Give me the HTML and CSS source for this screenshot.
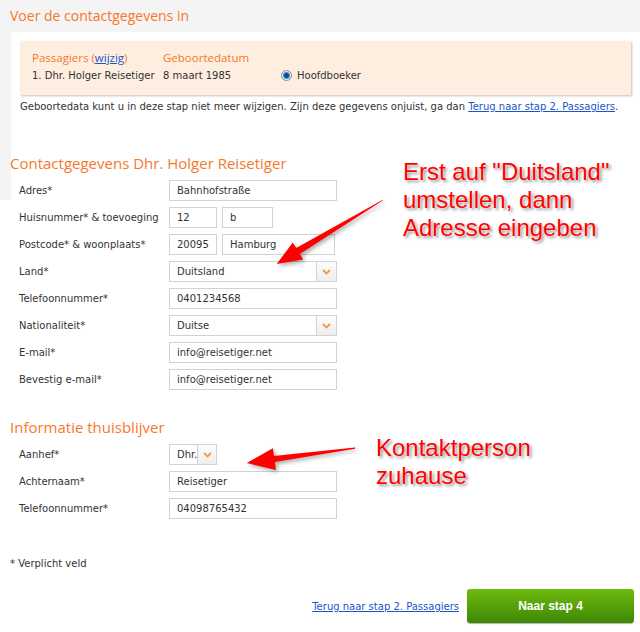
FILE: index.html
```html
<!DOCTYPE html>
<html lang="nl">
<head>
  <meta charset="UTF-8">
  <title>Contactgegevens</title>
  <link rel="stylesheet" href="styles.css">
</head>
<body>
  <div class="page">
    <h1 class="page-title">Voer de contactgegevens in</h1>

    <div class="passengers">
      <div class="pass-row pass-head">
        <span class="col-name">Passagiers (<a href="#">wijzig</a>)</span>
        <span class="col-date">Geboortedatum</span>
      </div>
      <div class="pass-row">
        <span class="col-name">1. Dhr. Holger Reisetiger</span>
        <span class="col-date">8 maart 1985</span>
        <span class="radio"><span class="radio-dot"></span>Hoofdboeker</span>
      </div>
    </div>
    <p class="note">Geboortedata kunt u in deze stap niet meer wijzigen. Zijn deze gegevens onjuist, ga dan <a href="#">Terug naar stap 2. Passagiers</a>.</p>

    <h2 class="section-title">Contactgegevens Dhr. Holger Reisetiger</h2>
    <div class="form">
      <div class="form-row"><label>Adres*</label><span class="field w-full">Bahnhofstraße</span></div>
      <div class="form-row"><label>Huisnummer* &amp; toevoeging</label><span class="field w-small">12</span><span class="field w-addon">b</span></div>
      <div class="form-row"><label>Postcode* &amp; woonplaats*</label><span class="field w-small">20095</span><span class="field w-city">Hamburg</span></div>
      <div class="form-row"><label>Land*</label><span class="select w-full"><span class="select-value">Duitsland</span><span class="select-btn"><svg width="9" height="6" viewBox="0 0 9 6"><path d="M1 1l3.5 3.5L8 1" fill="none" stroke="#f39a3c" stroke-width="1.8"/></svg></span></span></div>
      <div class="form-row"><label>Telefoonnummer*</label><span class="field w-full">0401234568</span></div>
      <div class="form-row"><label>Nationaliteit*</label><span class="select w-full"><span class="select-value">Duitse</span><span class="select-btn"><svg width="9" height="6" viewBox="0 0 9 6"><path d="M1 1l3.5 3.5L8 1" fill="none" stroke="#f39a3c" stroke-width="1.8"/></svg></span></span></div>
      <div class="form-row"><label>E-mail*</label><span class="field w-full">info@reisetiger.net</span></div>
      <div class="form-row"><label>Bevestig e-mail*</label><span class="field w-full">info@reisetiger.net</span></div>
    </div>

    <h2 class="section-title second">Informatie thuisblijver</h2>
    <div class="form">
      <div class="form-row"><label>Aanhef*</label><span class="select w-title"><span class="select-value">Dhr.</span><span class="select-btn"><svg width="9" height="6" viewBox="0 0 9 6"><path d="M1 1l3.5 3.5L8 1" fill="none" stroke="#f39a3c" stroke-width="1.8"/></svg></span></span></div>
      <div class="form-row"><label>Achternaam*</label><span class="field w-full">Reisetiger</span></div>
      <div class="form-row"><label>Telefoonnummer*</label><span class="field w-full">04098765432</span></div>
    </div>

    <p class="required">* Verplicht veld</p>

    <div class="actions">
      <a href="#" class="back-link">Terug naar stap 2. Passagiers</a>
      <button class="next-btn">Naar stap 4</button>
    </div>

    <!-- annotaties -->
    <div class="callout callout-land">Erst auf "Duitsland"<br>umstellen, dann<br>Adresse eingeben</div>
    <div class="callout callout-home">Kontaktperson<br>zuhause</div>
    <svg class="arrows" width="640" height="632" viewBox="0 0 640 632">
      <polygon points="383.3,199.4 382.7,200.4 299.8,254 303.2,259.6 276.7,264 292.8,242.5 296.2,248" fill="#f00"/>
      <polygon points="355,447.6 355.1,448.8 274.8,462.1 275.9,470 246.7,463 272.9,448.2 274,456.1" fill="#f00"/>
    </svg>
  </div>
</body>
</html>
```

FILE: styles.css
```css
body {
  margin: 0;
  background-color: #fff;
  font-family: 'DejaVu Sans', Verdana, sans-serif;
  font-size: 10px;
  color: #333;
}

.page {
  position: relative;
  width: 640px;
  height: 632px;
  overflow: hidden;
  background:
    linear-gradient(#f4f4f4, #f4f4f4) no-repeat 0 0 / 100% 32px,
    linear-gradient(#f4f4f4, #f4f4f4) no-repeat 0 0 / 11px 200px,
    #fff;
}

a {
  color: #1a55c8;
}

.page-title,
.section-title {
  font-family: 'Open Sans', sans-serif;
  font-weight: normal;
  color: #f7782a;
  margin: 0;
}

.page-title {
  font-size: 14px;
  line-height: 32px;
  padding-left: 10px;
  height: 32px;
}

.passengers {
  margin: 9px 9px 0 20px;
  height: 54px;
  background-color: #fdeee0;
  box-shadow: 1px 1px 2px rgba(0, 0, 0, 0.25);
  padding: 7px 0 0 12px;
  box-sizing: border-box;
}

.pass-row {
  display: flex;
  align-items: center;
  height: 18px;
}

.pass-head {
  font-family: 'Open Sans', sans-serif;
  font-size: 11.5px;
  color: #f7782a;
}

.pass-head a {
  color: #1a55c8;
}

.col-name {
  width: 131px;
}

.col-date {
  width: 118px;
}

.radio {
  display: flex;
  align-items: center;
  gap: 5px;
}

.radio-dot {
  width: 9px;
  height: 9px;
  border-radius: 50%;
  border: 1px solid #8a8a8a;
  background: radial-gradient(circle, #0f4f86 0 2px, #3b9ad9 3px, #e6eef4 4px);
}

.note {
  margin: 6px 0 0 20px;
  font-size: 10px;
  line-height: 12px;
}

.section-title {
  font-size: 15px;
  line-height: 20px;
  padding-left: 10px;
  margin-top: 40px;
}

.section-title.second {
  margin-top: 24px;
}

.form {
  padding: 4px 0 0 19px;
}

.form-row {
  display: flex;
  align-items: center;
  height: 27px;
}

.form-row label {
  width: 150px;
}

.field,
.select {
  display: flex;
  align-items: center;
  height: 21px;
  box-sizing: border-box;
  border: 1px solid #d2d2d2;
  background-color: #fff;
  padding-left: 7px;
  color: #333;
}

.field + .field {
  margin-left: 5px;
}

.w-full { width: 168px; }
.w-small { width: 48px; }
.w-addon { width: 51px; }
.w-city { width: 113px; }
.w-title { width: 48px; }

.select {
  padding: 0;
}

.select-value {
  flex: 1;
  padding-left: 7px;
}

.select-btn {
  width: 19px;
  height: 19px;
  display: flex;
  align-items: center;
  justify-content: center;
  border-left: 1px solid #d2d2d2;
  background: linear-gradient(#fdfdfd, #eeeeee);
}

.required {
  margin: 36px 0 0 10px;
  font-size: 10px;
}

.actions {
  display: flex;
  align-items: center;
  justify-content: flex-end;
  gap: 8px;
  margin: 20px 6px 0 0;
}

.back-link {
  font-size: 10px;
}

.next-btn {
  width: 167px;
  height: 34px;
  border: none;
  border-radius: 3px;
  background: linear-gradient(#6fbb0e, #3d8706);
  color: #fff;
  font-family: 'Liberation Sans', Arial, sans-serif;
  font-weight: bold;
  font-size: 12px;
  box-shadow: 0 1px 1px rgba(0, 0, 0, 0.3);
}

.callout {
  position: absolute;
  font-family: 'Liberation Sans', Arial, sans-serif;
  font-size: 24px;
  line-height: 28px;
  color: #f00;
  text-shadow: 0 0 2px #fff, 2px 2px 3px rgba(0, 0, 0, 0.45);
}

.callout-land {
  left: 403px;
  top: 158px;
}

.callout-home {
  left: 376px;
  top: 434px;
}

.arrows {
  position: absolute;
  left: 0;
  top: 0;
  filter: drop-shadow(2px 2px 2px rgba(0, 0, 0, 0.35));
}
```
